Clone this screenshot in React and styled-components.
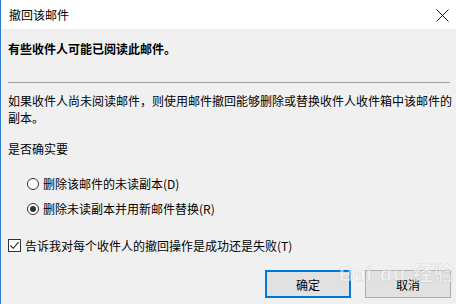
import styled, { createGlobalStyle } from 'styled-components'

const GlobalStyle = createGlobalStyle`
  html, body {
    margin: 0;
    padding: 0;
    background: #f0f0f0;
  }
  body {
    font-family: "Noto Sans CJK SC", "Noto Sans", sans-serif;
    font-size: 12px;
    color: #000;
  }
`

const Window = styled.div`
  position: relative;
  width: 456px;
  height: 304px;
  box-sizing: border-box;
  border-left: 1px solid #2b7bd0;
  background: #f0f0f0;
  overflow: hidden;
`
const TitleBar = styled.div`
  display: flex;
  align-items: center;
  justify-content: space-between;
  height: 29px;
  padding: 0 7px 0 8px;
  background: #ffffff;
  font-size: 12px;
`
const CloseIcon = styled.svg`
  width: 13px;
  height: 13px;
  margin-top: 2px;
`
const Body = styled.div`
  padding: 0 4px 0 7px;
`
const Heading = styled.div`
  margin-top: 11px;
  line-height: 17px;
  font-weight: 700;
`
const Separator = styled.div`
  margin-top: 25px;
  height: 1px;
  margin-right: 2px;
  background: #a0a0a0;
`
const Paragraph = styled.div`
  margin-top: ${p => p.$top}px;
  line-height: 17px;
`
const Options = styled.div`
  display: flex;
  flex-direction: column;
  gap: 8px;
  margin-top: 18px;
  padding-left: 19px;
`
const Option = styled.label`
  display: flex;
  align-items: center;
  gap: 4px;
  height: 17px;
  line-height: 17px;
`
const Radio = styled.span`
  position: relative;
  width: 12px;
  height: 12px;
  box-sizing: border-box;
  border: 1px solid #333;
  border-radius: 50%;
  background: #fff;
  &::after {
    content: '';
    display: ${p => (p.$checked ? 'block' : 'none')};
    position: absolute;
    left: 2px;
    top: 2px;
    width: 6px;
    height: 6px;
    border-radius: 50%;
    background: #333;
  }
`
const CheckRow = styled.label`
  display: flex;
  align-items: center;
  gap: 4px;
  margin-top: 20px;
  height: 17px;
  line-height: 17px;
`
const Checkbox = styled.span`
  display: flex;
  align-items: center;
  justify-content: center;
  width: 13px;
  height: 13px;
  box-sizing: border-box;
  border: 1px solid #333;
  background: #fff;
`
const Buttons = styled.div`
  display: flex;
  justify-content: flex-end;
  gap: 14px;
  margin-top: 16px;
  padding-right: 1px;
`
const Button = styled.div`
  display: flex;
  align-items: center;
  justify-content: center;
  width: 86px;
  height: 28px;
  box-sizing: border-box;
  background: #e1e1e1;
  border: ${p => (p.$primary ? '2px solid #0078d7' : '1px solid #adadad')};
`
const Watermark = styled.div`
  position: absolute;
  left: 338px;
  top: 258px;
  font-family: "Liberation Sans", "Noto Sans CJK SC", sans-serif;
  font-size: 20px;
  font-weight: 700;
  letter-spacing: 1px;
  color: rgba(255, 255, 255, 0.55);
  -webkit-text-stroke: 0.5px rgba(170, 170, 170, 0.45);
  pointer-events: none;
`

const App = () => (
  <Window>
    <GlobalStyle />
    <TitleBar>
      <span>撤回该邮件</span>
      <CloseIcon viewBox="0 0 13 13">
        <path d="M0.5 0.5L12.5 12.5M12.5 0.5L0.5 12.5" stroke="#111" strokeWidth="1" fill="none" />
      </CloseIcon>
    </TitleBar>
    <Body>
      <Heading>有些收件人可能已阅读此邮件。</Heading>
      <Separator />
      <Paragraph $top={9}>
        如果收件人尚未阅读邮件，则使用邮件撤回能够删除或替换收件人收件箱中该邮件的副本。
      </Paragraph>
      <Paragraph $top={14}>是否确实要</Paragraph>
      <Options>
        <Option>
          <Radio />
          删除该邮件的未读副本(D)
        </Option>
        <Option>
          <Radio $checked />
          删除未读副本并用新邮件替换(R)
        </Option>
      </Options>
      <CheckRow>
        <Checkbox>
          <svg width="11" height="11" viewBox="0 0 11 11">
            <path d="M1.5 5.5L4.2 8.3L9.6 2.2" stroke="#222" strokeWidth="1.1" fill="none" />
          </svg>
        </Checkbox>
        告诉我对每个收件人的撤回操作是成功还是失败(T)
      </CheckRow>
      <Buttons>
        <Button $primary>确定</Button>
        <Button>取消</Button>
      </Buttons>
    </Body>
    <Watermark>Bai du 经验</Watermark>
  </Window>
)

export default App
